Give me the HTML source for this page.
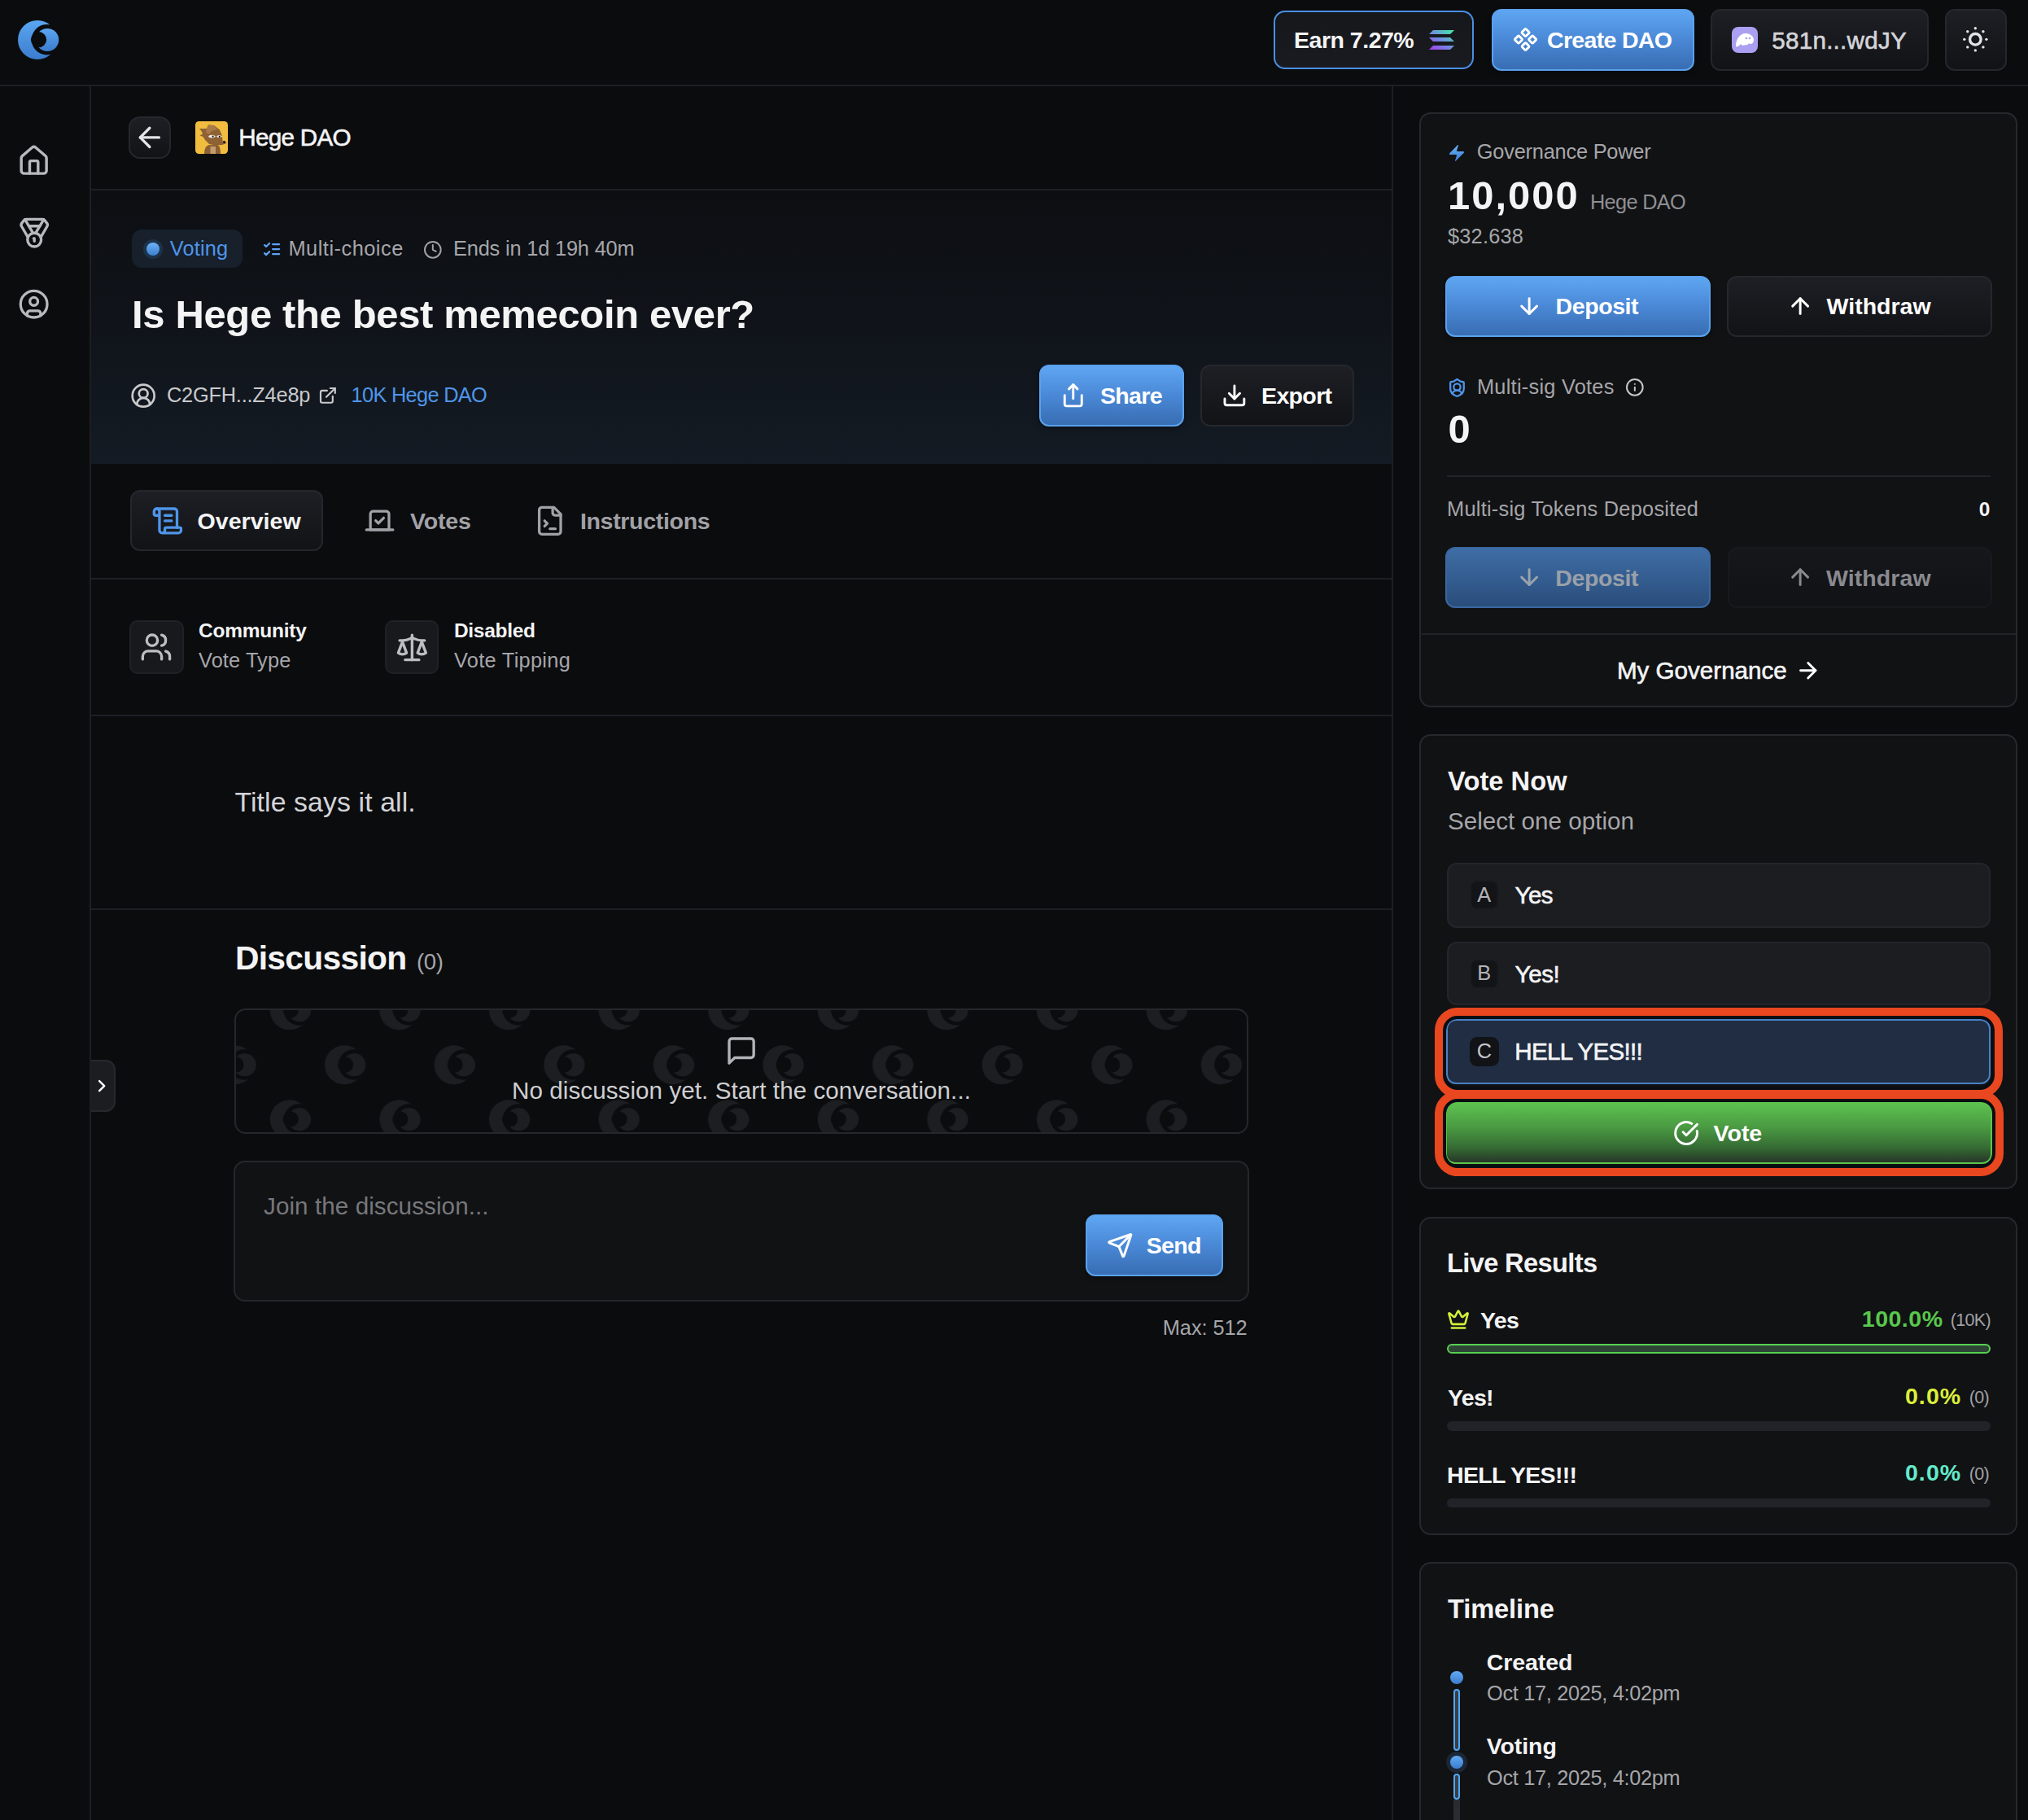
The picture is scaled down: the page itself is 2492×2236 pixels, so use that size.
<!DOCTYPE html>
<html><head><meta charset="utf-8"><title>Hege DAO Proposal</title>
<style>
html,body{margin:0;padding:0;}
body{width:2492px;height:2236px;overflow:hidden;position:relative;background:#0b0c0e;font-family:"Liberation Sans",sans-serif;}
.t{position:absolute;white-space:nowrap;}
.b{position:absolute;}
.i{position:absolute;overflow:visible;}
</style></head><body>
<div class="b" style="left:0px;top:104px;width:2492px;height:2px;background:#1e1f23"></div>
<div class="b" style="left:110px;top:106px;width:2px;height:2130px;background:#1e1f23"></div>
<svg class="i" style="left:20px;top:23px" width="52" height="52" viewBox="0 0 52 52">
<defs><linearGradient id="lg" x1="0" y1="0" x2="0" y2="1"><stop offset="0" stop-color="#5aa6f3"/><stop offset="1" stop-color="#3c7ccc"/></linearGradient></defs>
<circle cx="26" cy="26" r="24" fill="url(#lg)"/>
<circle cx="37.6" cy="25.7" r="18.8" fill="#0b0c0e"/>
<circle cx="38.2" cy="26" r="14" fill="url(#lg)"/>
<circle cx="27.5" cy="25.7" r="9.6" fill="#0b0c0e"/>
</svg>
<div class="b" style="left:1565px;top:13px;width:246px;height:72px;background:linear-gradient(180deg,#16171b,#1a1b20);border:2px solid #4a8fe3;border-radius:14px;box-sizing:border-box;"></div>
<div class="t" style="left:1590.00px;top:34.52px;font-size:28.56px;line-height:28.56px;color:#f4f4f5;font-weight:bold;letter-spacing:-0.511px;">Earn 7.27%</div>
<svg class="i" style="left:1756px;top:36px" width="32" height="26" viewBox="0 0 32 26">
<defs><linearGradient id="sol" x1="0" y1="1" x2="1" y2="0"><stop offset="0" stop-color="#a63cf0"/><stop offset=".5" stop-color="#6e8fe0"/><stop offset="1" stop-color="#3ef0a0"/></linearGradient></defs>
<path d="M5 1H31L26 6H0Z M0 10H26L31 15H5Z M5 20H31L26 25H0Z" fill="url(#sol)"/>
</svg>
<div class="b" style="left:1833px;top:11px;width:249px;height:76px;background:linear-gradient(180deg,#5ea6f2 0%,#4a88d6 50%,#386db2 100%);border:2px solid #5aa2ee;border-radius:12px;box-shadow:0 2px 6px rgba(0,0,0,.4);box-sizing:border-box;"></div>
<svg class="i" style="left:1859.45px;top:33.45px;" width="31.09" height="31.09" viewBox="0 0 24 24" fill="none" stroke="#ffffff" stroke-width="2.2" stroke-linecap="round" stroke-linejoin="round"><path d="M15.536 11.293a1 1 0 0 0 0 1.414l2.376 2.377a1 1 0 0 0 1.414 0l2.377-2.377a1 1 0 0 0 0-1.414l-2.377-2.377a1 1 0 0 0-1.414 0z"/><path d="M2.297 11.293a1 1 0 0 0 0 1.414l2.377 2.377a1 1 0 0 0 1.414 0l2.377-2.377a1 1 0 0 0 0-1.414L6.088 8.916a1 1 0 0 0-1.414 0z"/><path d="M8.916 17.912a1 1 0 0 0 0 1.415l2.377 2.376a1 1 0 0 0 1.414 0l2.377-2.376a1 1 0 0 0 0-1.415l-2.377-2.376a1 1 0 0 0-1.414 0z"/><path d="M8.916 4.674a1 1 0 0 0 0 1.414l2.377 2.376a1 1 0 0 0 1.414 0l2.377-2.376a1 1 0 0 0 0-1.414l-2.377-2.377a1 1 0 0 0-1.414 0z"/></svg>
<div class="t" style="left:1901.00px;top:34.52px;font-size:28.56px;line-height:28.56px;color:#ffffff;font-weight:bold;letter-spacing:-0.700px;">Create DAO</div>
<div class="b" style="left:2102px;top:11px;width:268px;height:76px;background:linear-gradient(180deg,#1d1f24 0%,#121317 100%);border:2px solid #25272c;border-radius:12px;box-sizing:border-box;"></div>
<div class="b" style="left:2128px;top:33px;width:32px;height:32px;border-radius:8px;background:#ab9ff2"></div>
<svg class="i" style="left:2131px;top:38px" width="26" height="22" viewBox="0 0 26 22"><path d="M2 19C2 10 7 3 14 3C20 3 24 7 24 11C24 14 22 16 20 16C19 16 18 15.5 18 15C17 17 15 18 13.5 17C12 18.5 9 18 8 16C6 19 3 20 2 19Z" fill="#fff"/><circle cx="15" cy="9" r="1.3" fill="#ab9ff2"/><circle cx="19" cy="9" r="1.3" fill="#ab9ff2"/></svg>
<div class="t" style="left:2177.30px;top:34.64px;font-size:29.60px;line-height:29.60px;color:#d4d4d8;font-weight:normal;letter-spacing:0.250px;-webkit-text-stroke:0.6px #d4d4d8;">581n...wdJY</div>
<div class="b" style="left:2390px;top:11px;width:76px;height:76px;background:linear-gradient(180deg,#1d1f24 0%,#121317 100%);border:2px solid #25272c;border-radius:12px;box-sizing:border-box;"></div>
<svg class="i" style="left:2407.47px;top:28.37px;" width="40.67" height="40.67" viewBox="0 0 24 24" fill="none" stroke="#e4e4e7" stroke-width="2" stroke-linecap="round" stroke-linejoin="round"><circle cx="12" cy="12" r="4"/><path d="M12 4h.01"/><path d="M20 12h.01"/><path d="M12 20h.01"/><path d="M4 12h.01"/><path d="M17.657 6.343h.01"/><path d="M17.657 17.657h.01"/><path d="M6.343 17.657h.01"/><path d="M6.343 6.343h.01"/></svg>
<svg class="i" style="left:21.37px;top:176.97px;" width="41.27" height="41.27" viewBox="0 0 24 24" fill="none" stroke="#b9b9bd" stroke-width="2" stroke-linecap="round" stroke-linejoin="round"><path d="M15 21v-8a1 1 0 0 0-1-1h-4a1 1 0 0 0-1 1v8"/><path d="M3 10a2 2 0 0 1 .709-1.528l7-5.999a2 2 0 0 1 2.582 0l7 5.999A2 2 0 0 1 21 10v9a2 2 0 0 1-2 2H5a2 2 0 0 1-2-2z"/></svg>
<svg class="i" style="left:21.80px;top:265.80px;" width="40.41" height="40.41" viewBox="0 0 24 24" fill="none" stroke="#b9b9bd" stroke-width="2" stroke-linecap="round" stroke-linejoin="round"><path d="M7.21 15 2.66 7.14a2 2 0 0 1 .13-2.2L4.4 2.8A2 2 0 0 1 6 2h12a2 2 0 0 1 1.6.8l1.6 2.14a2 2 0 0 1 .14 2.2L16.79 15"/><path d="M11 12 5.12 2.2"/><path d="m13 12 5.88-9.8"/><path d="M8 7h8"/><circle cx="12" cy="17" r="5"/><path d="M12 18v-2h-.5"/></svg>
<svg class="i" style="left:22.36px;top:354.36px;" width="39.27" height="39.27" viewBox="0 0 24 24" fill="none" stroke="#b9b9bd" stroke-width="2" stroke-linecap="round" stroke-linejoin="round"><circle cx="12" cy="12" r="10"/><circle cx="12" cy="10" r="3"/><path d="M7 20.662V19a2 2 0 0 1 2-2h6a2 2 0 0 1 2 2v1.662"/></svg>
<div class="b" style="left:112px;top:232px;width:1598px;height:2px;background:#1e1f23"></div>
<div class="b" style="left:158px;top:143px;width:52px;height:52px;background:linear-gradient(180deg,#1d1f24 0%,#121317 100%);border:2px solid #25272c;border-radius:12px;border-radius:14px;box-sizing:border-box;"></div>
<svg class="i" style="left:163.62px;top:149.12px;" width="39.75" height="39.75" viewBox="0 0 24 24" fill="none" stroke="#e4e4e7" stroke-width="2" stroke-linecap="round" stroke-linejoin="round"><path d="m12 19-7-7 7-7"/><path d="M19 12H5"/></svg>
<svg class="i" style="left:240px;top:149px" width="40" height="40" viewBox="0 0 40 40">
<rect width="40" height="40" rx="4.5" fill="#f1bd3f"/>
<path d="M11,40 C11,34 13,30 17,29 L27,29 C30,30 31,34 31,40 Z" fill="#8b6035"/>
<rect x="18.5" y="31" width="6.5" height="9" fill="#c49d6e"/>
<path d="M5,9 L14,9 L16,4.5 L23,5 L30,10.5 L33,18 L33.5,24.5 L37,25 L38.5,27 L33,29 L25,29.5 L17,28 L12,23 L9.5,19 L5.5,17.5 L9,15.5 L7.5,12 Z" fill="#8e6234"/>
<path d="M14,9 L16,4.5 L23,5 L27,10 L20,12 L17,16 L13,14 Z" fill="#a97a48"/>
<path d="M16,19 C17,16.5 22,16 25,18.5 C23,21 18,21 16,19 Z" fill="#f3f0e6"/>
<path d="M26,18.5 C28,16.5 31,17 33,18.5 C31,20.5 28,20.5 26,18.5 Z" fill="#f3f0e6"/>
<circle cx="21.6" cy="18.6" r="1.1" fill="#111"/><circle cx="29.8" cy="18.8" r="1.1" fill="#111"/>
<circle cx="35.5" cy="25.5" r="1.4" fill="#111"/>
</svg>
<div class="t" style="left:293.30px;top:153.94px;font-size:29.60px;line-height:29.60px;color:#f4f4f5;font-weight:normal;letter-spacing:-0.700px;-webkit-text-stroke:0.6px #f4f4f5;">Hege DAO</div>
<div class="b" style="left:112px;top:234px;width:1598px;height:336px;background:linear-gradient(180deg,#0c0e12 0%,#10141a 50%,#141b24 100%)"></div>
<div class="b" style="left:161.5px;top:282px;width:136.10000000000002px;height:47.30000000000001px;background:#17202b;border-radius:12px"></div>
<div class="b" style="left:176px;top:293.8px;width:24px;height:24px;border-radius:12px;background:#1c3349"></div>
<div class="b" style="left:180px;top:297.8px;width:16px;height:16px;border-radius:8px;background:linear-gradient(180deg,#6cb2f8,#3d7fd0)"></div>
<div class="t" style="left:208.80px;top:292.52px;font-size:25.37px;line-height:25.37px;color:#4f95e9;font-weight:normal;letter-spacing:0.180px;">Voting</div>
<svg class="i" style="left:321.76px;top:293.91px;" width="24.18" height="24.18" viewBox="0 0 24 24" fill="none" stroke="#5ba3f5" stroke-width="2.2" stroke-linecap="round" stroke-linejoin="round"><path d="m3 17 2 2 4-4"/><path d="m3 7 2 2 4-4"/><path d="M13 6h8"/><path d="M13 12h8"/><path d="M13 18h8"/></svg>
<div class="t" style="left:354.50px;top:293.02px;font-size:25.37px;line-height:25.37px;color:#a6a6aa;font-weight:normal;letter-spacing:0.500px;">Multi-choice</div>
<svg class="i" style="left:519.96px;top:294.66px;" width="23.67" height="23.67" viewBox="0 0 24 24" fill="none" stroke="#a1a1a6" stroke-width="2" stroke-linecap="round" stroke-linejoin="round"><circle cx="12" cy="12" r="10"/><polyline points="12 6 12 12 16 14"/></svg>
<div class="t" style="left:557.00px;top:293.02px;font-size:25.37px;line-height:25.37px;color:#a6a6aa;font-weight:normal;letter-spacing:-0.171px;">Ends in 1d 19h 40m</div>
<div class="t" style="left:162.00px;top:361.55px;font-size:48.96px;line-height:48.96px;color:#f4f4f5;font-weight:bold;letter-spacing:-0.337px;">Is Hege the best memecoin ever?</div>
<svg class="i" style="left:159.63px;top:469.68px;" width="32.35" height="32.35" viewBox="0 0 24 24" fill="none" stroke="#c9c9cc" stroke-width="2" stroke-linecap="round" stroke-linejoin="round"><path d="M18 20a6 6 0 0 0-12 0"/><circle cx="12" cy="10" r="4"/><circle cx="12" cy="12" r="10"/></svg>
<div class="t" style="left:205.00px;top:472.52px;font-size:25.37px;line-height:25.37px;color:#c9c9cc;font-weight:normal;letter-spacing:-0.217px;">C2GFH...Z4e8p</div>
<svg class="i" style="left:391.12px;top:473.92px;" width="23.76" height="23.76" viewBox="0 0 24 24" fill="none" stroke="#c9c9cc" stroke-width="2.2" stroke-linecap="round" stroke-linejoin="round"><path d="M15 3h6v6"/><path d="M10 14 21 3"/><path d="M18 13v6a2 2 0 0 1-2 2H5a2 2 0 0 1-2-2V8a2 2 0 0 1 2-2h6"/></svg>
<div class="t" style="left:431.60px;top:472.52px;font-size:25.37px;line-height:25.37px;color:#4f95e9;font-weight:normal;letter-spacing:-0.700px;">10K Hege DAO</div>
<div class="b" style="left:1277px;top:448px;width:178px;height:76px;background:linear-gradient(180deg,#5ea6f2 0%,#4a88d6 50%,#386db2 100%);border:2px solid #5aa2ee;border-radius:12px;box-shadow:0 2px 6px rgba(0,0,0,.4);box-sizing:border-box;"></div>
<svg class="i" style="left:1303.25px;top:470.05px;" width="31.49" height="31.49" viewBox="0 0 24 24" fill="none" stroke="#ffffff" stroke-width="2.2" stroke-linecap="round" stroke-linejoin="round"><path d="M4 12v8a2 2 0 0 0 2 2h12a2 2 0 0 0 2-2v-8"/><polyline points="16 6 12 2 8 6"/><line x1="12" x2="12" y1="2" y2="15"/></svg>
<div class="t" style="left:1352.00px;top:471.62px;font-size:28.56px;line-height:28.56px;color:#ffffff;font-weight:bold;letter-spacing:-0.700px;">Share</div>
<div class="b" style="left:1475px;top:448px;width:188.5px;height:76px;background:linear-gradient(180deg,#1d1f24 0%,#121317 100%);border:2px solid #25272c;border-radius:12px;box-sizing:border-box;"></div>
<svg class="i" style="left:1501.15px;top:469.75px;" width="31.80" height="31.80" viewBox="0 0 24 24" fill="none" stroke="#ffffff" stroke-width="2.2" stroke-linecap="round" stroke-linejoin="round"><path d="M21 15v4a2 2 0 0 1-2 2H5a2 2 0 0 1-2-2v-4"/><polyline points="7 10 12 15 17 10"/><line x1="12" x2="12" y1="15" y2="3"/></svg>
<div class="t" style="left:1550.00px;top:471.62px;font-size:28.56px;line-height:28.56px;color:#ffffff;font-weight:bold;letter-spacing:-0.660px;">Export</div>
<div class="b" style="left:1710px;top:106px;width:2px;height:2130px;background:#1e1f23"></div>
<div class="b" style="left:160.4px;top:602px;width:236.29999999999998px;height:75px;background:linear-gradient(180deg,#1d1f24 0%,#121317 100%);border:2px solid #25272c;border-radius:12px;box-sizing:border-box;"></div>
<svg class="i" style="left:186.10px;top:619.90px;" width="39.80" height="39.80" viewBox="0 0 24 24" fill="none" stroke="#4f95e9" stroke-width="2" stroke-linecap="round" stroke-linejoin="round"><path d="M15 12h-5"/><path d="M15 8h-5"/><path d="M19 17V5a2 2 0 0 0-2-2H4"/><path d="M8 21h12a2 2 0 0 0 2-2v-1a1 1 0 0 0-1-1H11a1 1 0 0 0-1 1v1a2 2 0 1 1-4 0V5a2 2 0 1 0-4 0v2a1 1 0 0 0 1 1h3"/></svg>
<div class="t" style="left:242.50px;top:625.82px;font-size:28.56px;line-height:28.56px;color:#f4f4f5;font-weight:bold;letter-spacing:0.029px;">Overview</div>
<svg class="i" style="left:447.43px;top:620.43px;" width="39.14" height="39.14" viewBox="0 0 24 24" fill="none" stroke="#a1a1a6" stroke-width="2" stroke-linecap="round" stroke-linejoin="round"><path d="m9 12 2 2 4-4"/><path d="M5 7c0-1.1.9-2 2-2h10a2 2 0 0 1 2 2v12H5V7Z"/><path d="M22 19H2"/></svg>
<div class="t" style="left:504.00px;top:625.82px;font-size:28.56px;line-height:28.56px;color:#a1a1a6;font-weight:bold;letter-spacing:-0.200px;">Votes</div>
<svg class="i" style="left:656.18px;top:620.18px;" width="39.64" height="39.64" viewBox="0 0 24 24" fill="none" stroke="#a1a1a6" stroke-width="2" stroke-linecap="round" stroke-linejoin="round"><path d="M15 2H6a2 2 0 0 0-2 2v16a2 2 0 0 0 2 2h12a2 2 0 0 0 2-2V7Z"/><path d="M14 2v4a2 2 0 0 0 2 2h4"/><path d="m8 16 2-2-2-2"/><path d="M12 18h4"/></svg>
<div class="t" style="left:712.90px;top:625.82px;font-size:28.56px;line-height:28.56px;color:#a1a1a6;font-weight:bold;letter-spacing:-0.327px;">Instructions</div>
<div class="b" style="left:112px;top:710px;width:1598px;height:2px;background:#1e1f23"></div>
<div class="b" style="left:158.6px;top:761.7px;width:67.0px;height:66.29999999999995px;background:#18191c;border:2px solid #202125;border-radius:10px;box-sizing:border-box;"></div>
<svg class="i" style="left:171.54px;top:774.99px;" width="39.92" height="39.92" viewBox="0 0 24 24" fill="none" stroke="#bdbdc2" stroke-width="2" stroke-linecap="round" stroke-linejoin="round"><path d="M16 21v-2a4 4 0 0 0-4-4H6a4 4 0 0 0-4 4v2"/><circle cx="9" cy="7" r="4"/><path d="M22 21v-2a4 4 0 0 0-3-3.87"/><path d="M16 3.13a4 4 0 0 1 0 7.75"/></svg>
<div class="t" style="left:244.00px;top:763.27px;font-size:24.48px;line-height:24.48px;color:#f4f4f5;font-weight:bold;letter-spacing:-0.225px;">Community</div>
<div class="t" style="left:244.00px;top:799.22px;font-size:25.37px;line-height:25.37px;color:#a6a6aa;font-weight:normal;letter-spacing:0.112px;">Vote Type</div>
<div class="b" style="left:472.8px;top:761.7px;width:66.59999999999997px;height:66.29999999999995px;background:#18191c;border:2px solid #202125;border-radius:10px;box-sizing:border-box;"></div>
<svg class="i" style="left:485.68px;top:774.63px;" width="40.75" height="40.75" viewBox="0 0 24 24" fill="none" stroke="#bdbdc2" stroke-width="2" stroke-linecap="round" stroke-linejoin="round"><path d="m16 16 3-8 3 8c-.87.65-1.92 1-3 1s-2.130-.35-3-1Z"/><path d="m2 16 3-8 3 8c-.87.65-1.92 1-3 1s-2.13-.35-3-1Z"/><path d="M7 21h10"/><path d="M12 3v18"/><path d="M3 7h2c2 0 5-1 7-2 2 1 5 2 7 2h2"/></svg>
<div class="t" style="left:558.00px;top:763.27px;font-size:24.48px;line-height:24.48px;color:#f4f4f5;font-weight:bold;letter-spacing:-0.300px;">Disabled</div>
<div class="t" style="left:558.00px;top:799.22px;font-size:25.37px;line-height:25.37px;color:#a6a6aa;font-weight:normal;letter-spacing:0.291px;">Vote Tipping</div>
<div class="b" style="left:112px;top:878px;width:1598px;height:2px;background:#1e1f23"></div>
<div class="t" style="left:288.40px;top:968.56px;font-size:33.82px;line-height:33.82px;color:#d4d4d8;font-weight:normal;letter-spacing:0.112px;">Title says it all.</div>
<div class="b" style="left:112px;top:1116px;width:1598px;height:2px;background:#1e1f23"></div>
<div class="t" style="left:288.90px;top:1157.25px;font-size:40.80px;line-height:40.80px;color:#f4f4f5;font-weight:bold;letter-spacing:-0.700px;">Discussion</div>
<div class="t" style="left:511.90px;top:1168.13px;font-size:27.48px;line-height:27.48px;color:#a6a6aa;font-weight:normal;letter-spacing:-0.250px;">(0)</div>
<div class="b" style="left:287.7px;top:1238.7px;width:1246.3px;height:154.0999999999999px;border:2px solid #26272b;border-radius:14px;box-sizing:border-box;overflow:hidden;background:#0b0c0e">
<svg style="position:absolute;left:-2px;top:-2px" width="1246.3" height="154.0999999999999">
<defs><pattern id="pat" x="0" y="0" width="134.6" height="134" patternUnits="userSpaceOnUse"><g transform="translate(67.8,2.3) scale(1.0)"><circle cx="0" cy="0" r="24" fill="#1d1e21"/><circle cx="11.6" cy="-0.3" r="18.8" fill="#0b0c0e"/><circle cx="12.2" cy="0" r="14" fill="#1d1e21"/><circle cx="1.5" cy="-0.3" r="9.6" fill="#0b0c0e"/></g><g transform="translate(0.5,69.3) scale(1.0)"><circle cx="0" cy="0" r="24" fill="#1d1e21"/><circle cx="11.6" cy="-0.3" r="18.8" fill="#0b0c0e"/><circle cx="12.2" cy="0" r="14" fill="#1d1e21"/><circle cx="1.5" cy="-0.3" r="9.6" fill="#0b0c0e"/></g><g transform="translate(135.1,69.3) scale(1.0)"><circle cx="0" cy="0" r="24" fill="#1d1e21"/><circle cx="11.6" cy="-0.3" r="18.8" fill="#0b0c0e"/><circle cx="12.2" cy="0" r="14" fill="#1d1e21"/><circle cx="1.5" cy="-0.3" r="9.6" fill="#0b0c0e"/></g><g transform="translate(67.8,136.3) scale(1.0)"><circle cx="0" cy="0" r="24" fill="#1d1e21"/><circle cx="11.6" cy="-0.3" r="18.8" fill="#0b0c0e"/><circle cx="12.2" cy="0" r="14" fill="#1d1e21"/><circle cx="1.5" cy="-0.3" r="9.6" fill="#0b0c0e"/></g></pattern></defs>
<rect width="100%" height="100%" fill="url(#pat)"/></svg></div>
<svg class="i" style="left:890.90px;top:1271.40px;" width="40.20" height="40.20" viewBox="0 0 24 24" fill="none" stroke="#b4b4b8" stroke-width="2" stroke-linecap="round" stroke-linejoin="round"><path d="M21 15a2 2 0 0 1-2 2H7l-4 4V5a2 2 0 0 1 2-2h14a2 2 0 0 1 2 2z"/></svg>
<div class="t" style="left:629.00px;top:1324.54px;font-size:29.60px;line-height:29.60px;color:#cfcfd2;font-weight:normal;letter-spacing:0.070px;">No discussion yet. Start the conversation...</div>
<div class="b" style="left:287.2px;top:1426.2px;width:1247.3999999999999px;height:172.79999999999995px;background:#111214;border:2px solid #26272a;border-radius:14px;box-sizing:border-box;"></div>
<div class="t" style="left:324.00px;top:1467.14px;font-size:29.60px;line-height:29.60px;color:#77777c;font-weight:normal;letter-spacing:0.086px;">Join the discussion...</div>
<div class="b" style="left:1334px;top:1492px;width:169px;height:76px;background:linear-gradient(180deg,#5ea6f2 0%,#4a88d6 50%,#386db2 100%);border:2px solid #5aa2ee;border-radius:12px;box-shadow:0 2px 6px rgba(0,0,0,.4);box-sizing:border-box;"></div>
<svg class="i" style="left:1360.00px;top:1513.50px;" width="32.51" height="32.51" viewBox="0 0 24 24" fill="none" stroke="#ffffff" stroke-width="2.2" stroke-linecap="round" stroke-linejoin="round"><path d="M14.536 21.686a.5.5 0 0 0 .937-.024l6.5-19a.496.496 0 0 0-.635-.635l-19 6.5a.5.5 0 0 0-.024.937l7.93 3.18a2 2 0 0 1 1.112 1.11z"/><path d="m21.854 2.147-10.94 10.939"/></svg>
<div class="t" style="left:1408.70px;top:1515.72px;font-size:28.56px;line-height:28.56px;color:#ffffff;font-weight:bold;letter-spacing:-0.700px;">Send</div>
<div class="t" style="left:1428.80px;top:1618.52px;font-size:25.37px;line-height:25.37px;color:#a6a6aa;font-weight:normal;letter-spacing:-0.071px;">Max: 512</div>
<div class="b" style="left:112px;top:1302px;width:30px;height:64px;background:#1c1d21;border:2px solid #27282c;border-left:none;border-radius:0 12px 12px 0;box-sizing:border-box;"></div>
<svg class="i" style="left:112.75px;top:1321.85px;" width="24.30" height="24.30" viewBox="0 0 24 24" fill="none" stroke="#ffffff" stroke-width="2.4" stroke-linecap="round" stroke-linejoin="round"><path d="m9 18 6-6-6-6"/></svg>
<div class="b" style="left:1744px;top:138px;width:735px;height:731px;background:#111214;border:2px solid #27282c;border-radius:14px;box-sizing:border-box;"></div>
<svg class="i" style="left:1778px;top:176px" width="24" height="24" viewBox="0 0 24 24"><defs><linearGradient id="zg" x1="0" y1="0" x2="0" y2="1"><stop offset="0" stop-color="#6ab4fa"/><stop offset="1" stop-color="#3a7bd0"/></linearGradient></defs><path d="M4 14a1 1 0 0 1-.78-1.63l9.9-10.2a.5.5 0 0 1 .86.46l-1.92 6.02A1 1 0 0 0 13 10h7a1 1 0 0 1 .78 1.63l-9.9 10.2a.5.5 0 0 1-.86-.46l1.92-6.02A1 1 0 0 0 11 14z" fill="url(#zg)"/></svg>
<div class="t" style="left:1814.80px;top:174.22px;font-size:25.37px;line-height:25.37px;color:#a6a6aa;font-weight:normal;letter-spacing:-0.213px;">Governance Power</div>
<div class="t" style="left:1779.00px;top:215.75px;font-size:48.96px;line-height:48.96px;color:#f4f4f5;font-weight:bold;letter-spacing:2.020px;">10,000</div>
<div class="t" style="left:1954.00px;top:236.22px;font-size:25.37px;line-height:25.37px;color:#8e8e93;font-weight:normal;letter-spacing:-0.700px;">Hege DAO</div>
<div class="t" style="left:1779.00px;top:278.22px;font-size:25.37px;line-height:25.37px;color:#a6a6aa;font-weight:normal;letter-spacing:0.200px;">$32.638</div>
<div class="b" style="left:1776px;top:338.5px;width:326px;height:75.5px;background:linear-gradient(180deg,#5ea6f2 0%,#4a88d6 50%,#386db2 100%);border:2px solid #5aa2ee;border-radius:12px;box-shadow:0 2px 6px rgba(0,0,0,.4);box-sizing:border-box;"></div>
<svg class="i" style="left:1862.88px;top:360.38px;" width="32.25" height="32.25" viewBox="0 0 24 24" fill="none" stroke="#ffffff" stroke-width="2.2" stroke-linecap="round" stroke-linejoin="round"><path d="M12 5v14"/><path d="m19 12-7 7-7-7"/></svg>
<div class="t" style="left:1911.60px;top:362.22px;font-size:28.56px;line-height:28.56px;color:#ffffff;font-weight:bold;letter-spacing:-0.450px;">Deposit</div>
<div class="b" style="left:2122px;top:338.5px;width:326px;height:75.5px;background:linear-gradient(180deg,#1d1f24 0%,#121317 100%);border:2px solid #25272c;border-radius:12px;box-sizing:border-box;"></div>
<svg class="i" style="left:2195.88px;top:360.38px;" width="32.25" height="32.25" viewBox="0 0 24 24" fill="none" stroke="#ffffff" stroke-width="2.2" stroke-linecap="round" stroke-linejoin="round"><path d="m5 12 7-7 7 7"/><path d="M12 19V5"/></svg>
<div class="t" style="left:2244.60px;top:362.22px;font-size:28.56px;line-height:28.56px;color:#ffffff;font-weight:bold;letter-spacing:-0.029px;">Withdraw</div>
<svg class="i" style="left:1777.83px;top:463.53px;" width="24.93" height="24.93" viewBox="0 0 24 24" fill="none" stroke="#4f95e9" stroke-width="2.2" stroke-linecap="round" stroke-linejoin="round"><path d="M20 13c0 5-3.5 7.5-7.66 8.95a1 1 0 0 1-.67-.01C7.5 20.5 4 18 4 13V6a1 1 0 0 1 1-1c2 0 4.5-1.2 6.24-2.72a1.17 1.17 0 0 1 1.52 0C14.51 3.81 17 5 19 5a1 1 0 0 1 1 1z"/><path d="M6.376 18.91a6 6 0 0 1 11.249.003"/><circle cx="12" cy="11" r="4"/></svg>
<div class="t" style="left:1815.00px;top:462.52px;font-size:25.37px;line-height:25.37px;color:#a6a6aa;font-weight:normal;letter-spacing:0.250px;">Multi-sig Votes</div>
<svg class="i" style="left:1997.16px;top:464.46px;" width="23.67" height="23.67" viewBox="0 0 24 24" fill="none" stroke="#c9c9cc" stroke-width="2" stroke-linecap="round" stroke-linejoin="round"><circle cx="12" cy="12" r="10"/><path d="M12 16v-4"/><path d="M12 8h.01"/></svg>
<div class="t" style="left:1779.50px;top:502.95px;font-size:48.96px;line-height:48.96px;color:#f4f4f5;font-weight:bold;letter-spacing:0.000px;">0</div>
<div class="b" style="left:1778px;top:584px;width:668px;height:2px;background:#222327"></div>
<div class="t" style="left:1778.00px;top:613.42px;font-size:25.37px;line-height:25.37px;color:#a6a6aa;font-weight:normal;letter-spacing:0.256px;">Multi-sig Tokens Deposited</div>
<div class="t" style="left:2431.70px;top:614.17px;font-size:24.48px;line-height:24.48px;color:#f4f4f5;font-weight:bold;letter-spacing:0.000px;">0</div>
<div class="b" style="left:1776px;top:672px;width:326px;height:75px;background:linear-gradient(180deg,#3f6da5 0%,#335c8f 55%,#2a4d7a 100%);border:2px solid #3a67a0;border-radius:12px;box-sizing:border-box;"></div>
<svg class="i" style="left:1862.88px;top:693.38px;" width="32.25" height="32.25" viewBox="0 0 24 24" fill="none" stroke="#9aa3ad" stroke-width="2.2" stroke-linecap="round" stroke-linejoin="round"><path d="M12 5v14"/><path d="m19 12-7 7-7-7"/></svg>
<div class="t" style="left:1911.30px;top:696.02px;font-size:28.56px;line-height:28.56px;color:#9aa0a8;font-weight:bold;letter-spacing:-0.417px;">Deposit</div>
<div class="b" style="left:2123px;top:672px;width:325px;height:75px;background:linear-gradient(180deg,#16171b 0%,#111215 100%);border:2px solid #18191d;border-radius:12px;box-sizing:border-box;"></div>
<svg class="i" style="left:2195.88px;top:693.38px;" width="32.25" height="32.25" viewBox="0 0 24 24" fill="none" stroke="#8a8a8f" stroke-width="2.2" stroke-linecap="round" stroke-linejoin="round"><path d="m5 12 7-7 7 7"/><path d="M12 19V5"/></svg>
<div class="t" style="left:2244.00px;top:696.02px;font-size:28.56px;line-height:28.56px;color:#8a8a8f;font-weight:bold;letter-spacing:0.057px;">Withdraw</div>
<div class="b" style="left:1747px;top:778px;width:730px;height:2px;background:#222327"></div>
<div class="t" style="left:1986.90px;top:809.34px;font-size:29.60px;line-height:29.60px;color:#f4f4f5;font-weight:normal;letter-spacing:0.000px;-webkit-text-stroke:0.6px #f4f4f5;">My Governance</div>
<svg class="i" style="left:2206.25px;top:808.25px;" width="31.50" height="31.50" viewBox="0 0 24 24" fill="none" stroke="#ffffff" stroke-width="2.2" stroke-linecap="round" stroke-linejoin="round"><path d="M5 12h14"/><path d="m12 5 7 7-7 7"/></svg>
<div class="b" style="left:1744px;top:902px;width:735px;height:559px;background:#111214;border:2px solid #27282c;border-radius:14px;box-sizing:border-box;"></div>
<div class="t" style="left:1779.00px;top:943.76px;font-size:32.64px;line-height:32.64px;color:#f4f4f5;font-weight:bold;letter-spacing:0.057px;">Vote Now</div>
<div class="t" style="left:1779.00px;top:993.94px;font-size:29.60px;line-height:29.60px;color:#a6a6aa;font-weight:normal;letter-spacing:0.012px;">Select one option</div>
<div class="b" style="left:1778px;top:1060px;width:668px;height:80px;background:#1c1d21;border:2px solid #24252a;border-radius:12px;box-sizing:border-box;"></div>
<div class="b" style="left:1805.6px;top:1081px;width:36.40000000000009px;height:37px;background:#131417;border:2px solid #1b1c20;border-radius:9px;box-sizing:border-box;"></div>
<div class="t" style="left:1815.35px;top:1086.72px;font-size:25.37px;line-height:25.37px;color:#b4b4b8;font-weight:normal;letter-spacing:0.000px;">A</div>
<div class="t" style="left:1861.60px;top:1085.34px;font-size:29.60px;line-height:29.60px;color:#f4f4f5;font-weight:normal;letter-spacing:-0.700px;-webkit-text-stroke:0.6px #f4f4f5;">Yes</div>
<div class="b" style="left:1778px;top:1156.5px;width:668px;height:78.5px;background:#1c1d21;border:2px solid #24252a;border-radius:12px;box-sizing:border-box;"></div>
<div class="b" style="left:1805.6px;top:1177.5px;width:36.40000000000009px;height:37.0px;background:#131417;border:2px solid #1b1c20;border-radius:9px;box-sizing:border-box;"></div>
<div class="t" style="left:1815.35px;top:1183.22px;font-size:25.37px;line-height:25.37px;color:#b4b4b8;font-weight:normal;letter-spacing:0.000px;">B</div>
<div class="t" style="left:1861.60px;top:1181.84px;font-size:29.60px;line-height:29.60px;color:#f4f4f5;font-weight:normal;letter-spacing:-0.467px;-webkit-text-stroke:0.6px #f4f4f5;">Yes!</div>
<div class="b" style="left:1777.4px;top:1252px;width:668.5999999999999px;height:80px;background:#202d42;border:2px solid #4a80c4;border-radius:12px;box-sizing:border-box;"></div>
<div class="b" style="left:1806px;top:1273.8px;width:35.700000000000045px;height:36.200000000000045px;background:#111317;border-radius:9px;"></div>
<div class="t" style="left:1814.65px;top:1278.52px;font-size:25.37px;line-height:25.37px;color:#c4c4c8;font-weight:normal;letter-spacing:0.000px;">C</div>
<div class="t" style="left:1861.30px;top:1276.94px;font-size:29.60px;line-height:29.60px;color:#f4f4f5;font-weight:normal;letter-spacing:-0.700px;-webkit-text-stroke:0.6px #f4f4f5;">HELL YES!!!</div>
<div class="b" style="left:1776px;top:1354px;width:672px;height:76px;background:linear-gradient(180deg,#5cc14f 0%,#4a9a42 40%,#356b33 75%,#27362a 100%);border:2px solid #5bc44c;border-radius:12px;box-sizing:border-box;"></div>
<svg class="i" style="left:2056.41px;top:1375.91px;" width="32.18" height="32.18" viewBox="0 0 24 24" fill="none" stroke="#ffffff" stroke-width="2.2" stroke-linecap="round" stroke-linejoin="round"><path d="M21.801 10A10 10 0 1 1 17 3.335"/><path d="m9 11 3 3L22 4"/></svg>
<div class="t" style="left:2105.60px;top:1378.12px;font-size:28.56px;line-height:28.56px;color:#ffffff;font-weight:bold;letter-spacing:-0.033px;">Vote</div>
<div class="b" style="left:1763px;top:1238px;width:698px;height:110.5px;border:10.3px solid #e9471f;border-radius:28px;box-sizing:border-box;box-shadow:inset 0 0 0 4px #0a0e13;"></div>
<div class="b" style="left:1763px;top:1339.5px;width:699px;height:105px;border:10.3px solid #e9471f;border-radius:28px;box-sizing:border-box;box-shadow:inset 0 0 0 4px #0a0e13;"></div>
<div class="b" style="left:1744px;top:1494.5px;width:735px;height:391.5px;background:#111214;border:2px solid #27282c;border-radius:14px;box-sizing:border-box;"></div>
<div class="t" style="left:1778.00px;top:1536.26px;font-size:32.64px;line-height:32.64px;color:#f4f4f5;font-weight:bold;letter-spacing:-0.645px;">Live Results</div>
<svg class="i" style="left:1777.98px;top:1607.03px;" width="28.04" height="28.04" viewBox="0 0 24 24" fill="none" stroke="#d4ef3a" stroke-width="2.2" stroke-linecap="round" stroke-linejoin="round"><path d="M11.562 3.266a.5.5 0 0 1 .876 0L15.39 8.87a1 1 0 0 0 1.516.294L21.183 5.5a.5.5 0 0 1 .798.519l-2.834 10.246a1 1 0 0 1-.956.734H5.81a1 1 0 0 1-.957-.734L2.02 6.02a.5.5 0 0 1 .798-.519l4.276 3.664a1 1 0 0 0 1.516-.294z"/><path d="M5 21h14"/></svg>
<div class="t" style="left:1819.00px;top:1607.52px;font-size:28.56px;line-height:28.56px;color:#f4f4f5;font-weight:bold;letter-spacing:-0.700px;">Yes</div>
<div class="t" style="left:2287.80px;top:1605.62px;font-size:28.56px;line-height:28.56px;color:#58c84c;font-weight:bold;letter-spacing:0.480px;">100.0%</div>
<div class="t" style="left:2396.80px;top:1611.60px;font-size:21.50px;line-height:21.50px;color:#a1a1a6;font-weight:normal;letter-spacing:-0.700px;">(10K)</div>
<div class="b" style="left:1778px;top:1651px;width:668px;height:12px;background:#2f4536;border:2px solid #57d152;border-radius:6px;box-sizing:border-box;"></div>
<div class="t" style="left:1779.00px;top:1702.82px;font-size:28.56px;line-height:28.56px;color:#f4f4f5;font-weight:bold;letter-spacing:-0.700px;">Yes!</div>
<div class="t" style="left:2340.90px;top:1700.52px;font-size:28.56px;line-height:28.56px;color:#dcef3a;font-weight:bold;letter-spacing:1.100px;">0.0%</div>
<div class="t" style="left:2419.80px;top:1706.50px;font-size:21.50px;line-height:21.50px;color:#a1a1a6;font-weight:normal;letter-spacing:-0.700px;">(0)</div>
<div class="b" style="left:1778px;top:1745.7px;width:668px;height:11.899999999999864px;background:#212328;border-radius:6px;"></div>
<div class="t" style="left:1778.00px;top:1798.42px;font-size:28.56px;line-height:28.56px;color:#f4f4f5;font-weight:bold;letter-spacing:-0.700px;">HELL YES!!!</div>
<div class="t" style="left:2340.90px;top:1795.42px;font-size:28.56px;line-height:28.56px;color:#62eccb;font-weight:bold;letter-spacing:1.100px;">0.0%</div>
<div class="t" style="left:2419.80px;top:1801.40px;font-size:21.50px;line-height:21.50px;color:#a1a1a6;font-weight:normal;letter-spacing:-0.700px;">(0)</div>
<div class="b" style="left:1778px;top:1840.7px;width:668px;height:11.799999999999955px;background:#212328;border-radius:6px;"></div>
<div class="b" style="left:1744px;top:1919.4px;width:735px;height:380.5999999999999px;background:#111214;border:2px solid #27282c;border-radius:14px;box-sizing:border-box;"></div>
<div class="t" style="left:1779.00px;top:1961.06px;font-size:32.64px;line-height:32.64px;color:#f4f4f5;font-weight:bold;letter-spacing:-0.129px;">Timeline</div>
<div class="b" style="left:1782px;top:2053px;width:16px;height:16px;border-radius:8px;background:linear-gradient(180deg,#62abf5,#3b7ccc)"></div>
<div class="b" style="left:1785.8px;top:2075px;width:8.200000000000045px;height:76px;background:#3a3d44;border:2px solid #4fa6f5;border-radius:5px;box-sizing:border-box;"></div>
<div class="b" style="left:1777px;top:2152px;width:26px;height:26px;border-radius:13px;background:#1c2736"></div>
<div class="b" style="left:1782px;top:2157px;width:16px;height:16px;border-radius:8px;background:linear-gradient(180deg,#62abf5,#3b7ccc)"></div>
<div class="b" style="left:1785.8px;top:2179px;width:8.200000000000045px;height:32px;background:#3a3d44;border:2px solid #4fa6f5;border-radius:5px;box-sizing:border-box;"></div>
<div class="b" style="left:1785.8px;top:2211px;width:8.200000000000045px;height:25px;background:#2a2c31;"></div>
<div class="t" style="left:1826.70px;top:2028.12px;font-size:28.56px;line-height:28.56px;color:#f4f4f5;font-weight:bold;letter-spacing:-0.100px;">Created</div>
<div class="t" style="left:1827.00px;top:2068.42px;font-size:25.37px;line-height:25.37px;color:#a6a6aa;font-weight:normal;letter-spacing:-0.326px;">Oct 17, 2025, 4:02pm</div>
<div class="t" style="left:1826.70px;top:2130.62px;font-size:28.56px;line-height:28.56px;color:#f4f4f5;font-weight:bold;letter-spacing:-0.100px;">Voting</div>
<div class="t" style="left:1827.00px;top:2172.02px;font-size:25.37px;line-height:25.37px;color:#a6a6aa;font-weight:normal;letter-spacing:-0.326px;">Oct 17, 2025, 4:02pm</div>
</body></html>
